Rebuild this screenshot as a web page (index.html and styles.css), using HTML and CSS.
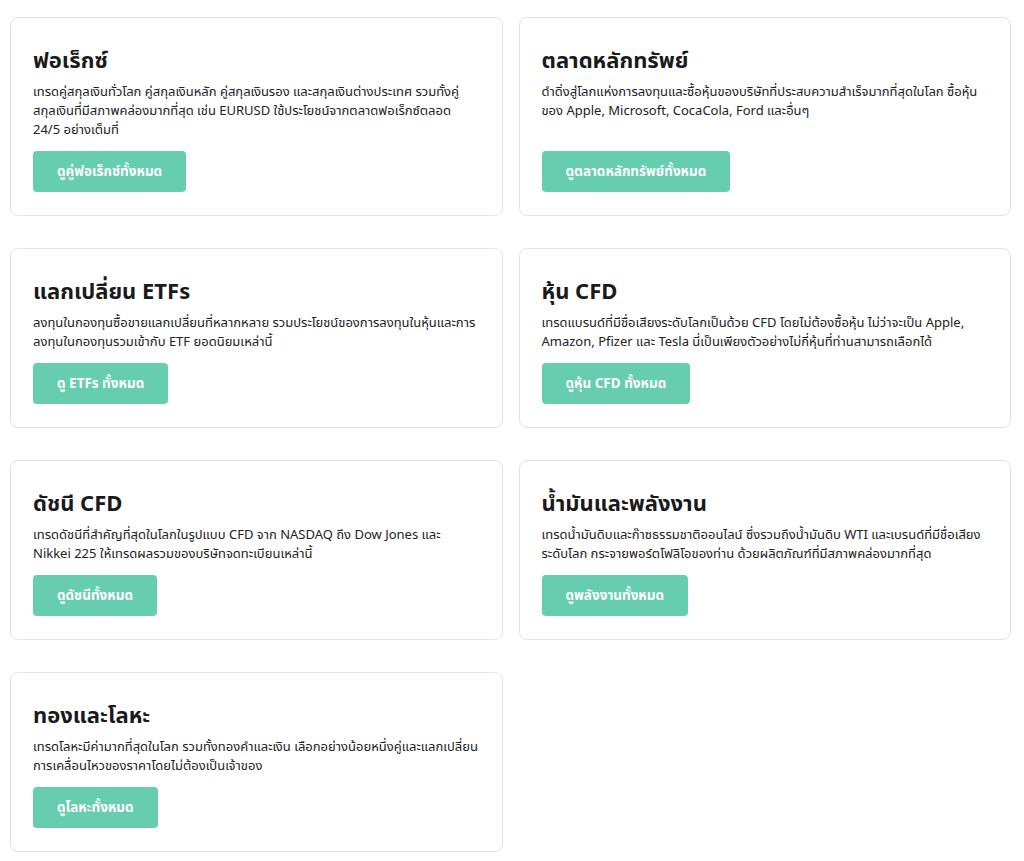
FILE: index.html
```html
<!DOCTYPE html>
<html lang="th">
<head>
<meta charset="utf-8">
<title>Markets</title>
<link rel="stylesheet" href="styles.css">
</head>
<body>
<main class="grid">
  <section class="card">
    <h2 class="card-title">ฟอเร็กซ์</h2>
    <p class="card-text">เทรดคู่สกุลเงินทั่วโลก คู่สกุลเงินหลัก คู่สกุลเงินรอง และสกุลเงินต่างประเทศ รวมทั้งคู่สกุลเงินที่มีสภาพคล่องมากที่สุด เช่น EURUSD ใช้ประโยชน์จากตลาดฟอเร็กซ์ตลอด 24/5 อย่างเต็มที่</p>
    <a class="btn" href="#">ดูคู่ฟอเร็กซ์ทั้งหมด</a>
  </section>
  <section class="card">
    <h2 class="card-title">ตลาดหลักทรัพย์</h2>
    <p class="card-text">ดำดิ่งสู่โลกแห่งการลงทุนและซื้อหุ้นของบริษัทที่ประสบความสำเร็จมากที่สุดในโลก ซื้อหุ้นของ Apple, Microsoft, CocaCola, Ford และอื่นๆ</p>
    <a class="btn" href="#">ดูตลาดหลักทรัพย์ทั้งหมด</a>
  </section>
  <section class="card">
    <h2 class="card-title">แลกเปลี่ยน ETFs</h2>
    <p class="card-text">ลงทุนในกองทุนซื้อขายแลกเปลี่ยนที่หลากหลาย รวมประโยชน์ของการลงทุนในหุ้นและการลงทุนในกองทุนรวมเข้ากับ ETF ยอดนิยมเหล่านี้</p>
    <a class="btn" href="#">ดู ETFs ทั้งหมด</a>
  </section>
  <section class="card">
    <h2 class="card-title">หุ้น CFD</h2>
    <p class="card-text">เทรดแบรนด์ที่มีชื่อเสียงระดับโลกเป็นด้วย CFD โดยไม่ต้องซื้อหุ้น ไม่ว่าจะเป็น Apple, Amazon, Pfizer และ Tesla นี่เป็นเพียงตัวอย่างไม่กี่หุ้นที่ท่านสามารถเลือกได้</p>
    <a class="btn" href="#">ดูหุ้น CFD ทั้งหมด</a>
  </section>
  <section class="card">
    <h2 class="card-title">ดัชนี CFD</h2>
    <p class="card-text">เทรดดัชนีที่สำคัญที่สุดในโลกในรูปแบบ CFD จาก NASDAQ ถึง Dow Jones และ Nikkei 225 ให้เทรดผลรวมของบริษัทจดทะเบียนเหล่านี้</p>
    <a class="btn" href="#">ดูดัชนีทั้งหมด</a>
  </section>
  <section class="card">
    <h2 class="card-title">น้ำมันและพลังงาน</h2>
    <p class="card-text">เทรดน้ำมันดิบและก๊าซธรรมชาติออนไลน์ ซึ่งรวมถึงน้ำมันดิบ WTI และเบรนด์ที่มีชื่อเสียงระดับโลก กระจายพอร์ตโฟลิโอของท่าน ด้วยผลิตภัณฑ์ที่มีสภาพคล่องมากที่สุด</p>
    <a class="btn" href="#">ดูพลังงานทั้งหมด</a>
  </section>
  <section class="card">
    <h2 class="card-title">ทองและโลหะ</h2>
    <p class="card-text">เทรดโลหะมีค่ามากที่สุดในโลก รวมทั้งทองคำและเงิน เลือกอย่างน้อยหนึ่งคู่และแลกเปลี่ยนการเคลื่อนไหวของราคาโดยไม่ต้องเป็นเจ้าของ</p>
    <a class="btn" href="#">ดูโลหะทั้งหมด</a>
  </section>
</main>
</body>
</html>
```
FILE: styles.css
```css
* { box-sizing: border-box; }
html, body { margin: 0; padding: 0; background: #ffffff; }
body {
  font-family: "Noto Sans", "Noto Sans Thai", "Noto Sans Thai UI", sans-serif;
  color: #1e1e1e;
}
.grid {
  display: grid;
  grid-template-columns: 1fr 1fr;
  column-gap: 16px;
  row-gap: 32px;
  padding: 17px 13px 10px 10px;
}
.card {
  display: flex;
  flex-direction: column;
  align-items: flex-start;
  border: 1px solid #e3e3e3;
  border-radius: 8px;
  padding: 23px 23px 23px 22px;
  background: #fff;
}
.card-title {
  margin: 0;
  font-size: 22px;
  font-weight: 700;
  line-height: 36px;
  color: #1a1a1a;
}
.card-text {
  margin: 5px 0 12px;
  font-size: 13px;
  line-height: 19px;
  color: #222;
}
.btn {
  margin-top: auto;
  display: inline-block;
  background: #66cdaf;
  color: #fff;
  font-size: 13.5px;
  font-weight: 700;
  line-height: 41px;
  height: 41px;
  padding: 0 24px;
  border-radius: 4px;
  text-decoration: none;
}
```
